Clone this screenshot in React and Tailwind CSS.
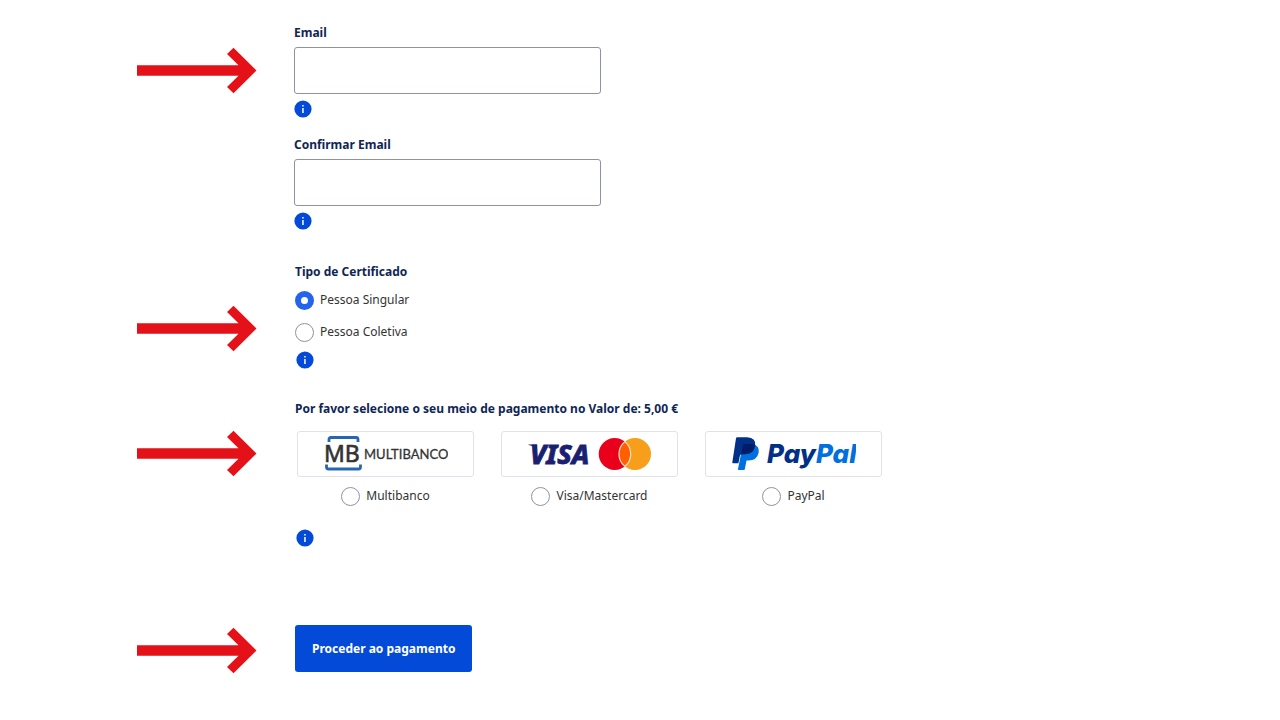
import React, { useState } from 'react';

const CERTIFICATE_TYPES = [
  { value: 'singular', label: 'Pessoa Singular' },
  { value: 'coletiva', label: 'Pessoa Coletiva' },
];

const PAYMENT_METHODS = [
  { value: 'multibanco', label: 'Multibanco', Logo: MultibancoLogo },
  { value: 'card', label: 'Visa/Mastercard', Logo: CardsLogo },
  { value: 'paypal', label: 'PayPal', Logo: PayPalLogo },
];

function MultibancoLogo() {
  return (
    <svg width="124" height="36" viewBox="0 0 124 36" aria-hidden="true">
      <path d="M5 6V3.500Q5 1.500 7 1.500H32Q34 1.500 34 3.500V6" fill="none" stroke="#2467b3" strokeWidth="2.8" />
      <path d="M2.500 28.500V31Q2.500 33 4.500 33H34.500Q36.500 33 36.500 31V28.500" fill="none" stroke="#2467b3" strokeWidth="2.8" />
      <text x="0" y="25.500" fontFamily="'Noto Sans', sans-serif" fontSize="23" fontWeight="400" fill="#333" stroke="#333" strokeWidth="0.6" strokeLinejoin="round">
        MB
      </text>
      <text x="40" y="23" fontFamily="Lato, sans-serif" fontSize="13" fontWeight="400" fill="#333" stroke="#333" strokeWidth="0.3" strokeLinejoin="round">
        MULTIBANCO
      </text>
    </svg>
  );
}

function CardsLogo() {
  return (
    <svg width="124" height="36" viewBox="0 0 124 36" aria-hidden="true">
      <path d="M0.500 8.500H9L9 14Q5 9.500 0.500 9Z" fill="#1a1f71" />
      <text x="2" y="28" fontFamily="'Noto Sans', sans-serif" fontSize="27" fontWeight="800" fontStyle="italic" fill="#1a1f71" stroke="#1a1f71" strokeWidth="0.8">
        VISA
      </text>
      <circle cx="86.700" cy="18" r="16" fill="#eb001b" />
      <circle cx="107" cy="18" r="16" fill="#f79e1b" />
      <path d="M96.850 5.600A16 16 0 0 1 96.850 30.400A16 16 0 0 1 96.850 5.600Z" fill="#ff5f00" stroke="#fde3c0" strokeWidth="1.2" />
    </svg>
  );
}

function PayPalLogo() {
  return (
    <svg width="124" height="36" viewBox="0 0 124 36" aria-hidden="true">
      <path d="M11 8H20Q28 9.500 26.700 16.500Q25 24.500 16.500 24.500H14.500L12.800 33.300Q12.600 34 11.900 34H6.600Q5.800 34 6 33.100Z" fill="#0070e0" />
      <path d="M5.200 1.200H15Q24.500 1.600 23.200 10Q21.600 18.300 12.800 18.300H9.600Q8.200 18.300 7.900 19.800L6.400 27.300H0.900Q0.200 27.300 0.300 26.600L4 2.300Q4.200 1.200 5.200 1.200Z" fill="#003087" />
      <path d="M11 8.500Q11.300 8 12 8H19.500Q21.500 8 23.100 9.100Q22 18.300 12.800 18.300H9.200Z" fill="#001c64" />
      <text x="35" y="27" fontFamily="Inter, sans-serif" fontSize="26" fontWeight="800" fontStyle="italic" fill="#003087">
        Pay
        <tspan fill="#0070e0">Pal</tspan>
      </text>
    </svg>
  );
}

function Arrow({ className }) {
  return (
    <svg width="120" height="47" viewBox="0 0 120 47" className={`shrink-0 ${className}`} aria-hidden="true">
      <path d="M0 18.200H101.500L90 7L96.500 0.700L119.500 23.500L96.500 46.300L90 40L101.500 28.800H0Z" fill="#e41218" />
    </svg>
  );
}

function InfoButton({ className }) {
  return (
    <button type="button" aria-label="Informação" className={`block size-[18px] ${className}`}>
      <svg viewBox="0 0 18 18" className="size-full">
        <circle cx="9" cy="9" r="8.600" fill="#034ad8" />
        <rect x="8.200" y="5" width="1.500" height="1.500" fill="#fff" />
        <rect x="8.200" y="8" width="1.500" height="5" fill="#fff" />
      </svg>
    </button>
  );
}

function Step({ arrowClass, className = '', children }) {
  return (
    <section className={`flex items-start gap-[37px] ${className}`}>
      <Arrow className={arrowClass} />
      <div className="min-w-0 flex-1">{children}</div>
    </section>
  );
}

function EmailField({ id, label }) {
  return (
    <div>
      <label htmlFor={id} className="block text-xs leading-[22px] font-bold text-[#0f2655]">
        {label}
      </label>
      <input
        id={id}
        type="email"
        className="mt-[3px] block h-[47px] w-full max-w-[307px] rounded-[3px] border border-[#8f92a1] px-3 text-xs"
      />
      <InfoButton className="mt-1.5" />
    </div>
  );
}

function RadioOption({ name, option, checked, onChange }) {
  return (
    <label className="flex h-[19px] items-start gap-1.5 text-xs leading-[17px] text-[#333]">
      <input
        type="radio"
        name={name}
        value={option.value}
        checked={checked}
        onChange={() => onChange(option.value)}
        className="size-[19px] shrink-0 appearance-none rounded-full border border-[#8f92a1] bg-white checked:border-[6px] checked:border-[#2463eb]"
      />
      {option.label}
    </label>
  );
}

export default function App() {
  const [certificate, setCertificate] = useState('singular');
  const [payment, setPayment] = useState(null);

  return (
    <form
      className="min-h-screen bg-white pt-[22px] pr-8 pb-12 pl-[137px] font-['Noto_Sans',sans-serif]"
      onSubmit={(e) => e.preventDefault()}
    >
      <Step arrowClass="mt-[25px]">
        <div className="space-y-4">
          <EmailField id="email" label="Email" />
          <EmailField id="confirm-email" label="Confirmar Email" />
        </div>
      </Step>

      <Step arrowClass="mt-11" className="mt-[31px]">
        <fieldset className="pl-px">
          <legend className="text-xs leading-[22px] font-bold text-[#0f2655]">Tipo de Certificado</legend>
          <div className="mt-2 flex flex-col items-start gap-[13px]">
            {CERTIFICATE_TYPES.map((option) => (
              <RadioOption
                key={option.value}
                name="certificate"
                option={option}
                checked={certificate === option.value}
                onChange={setCertificate}
              />
            ))}
          </div>
          <InfoButton className="mt-[9px] ml-px" />
        </fieldset>
      </Step>

      <Step arrowClass="mt-8" className="mt-[29px]">
        <fieldset className="pl-px">
          <legend className="text-xs leading-[22px] font-bold text-[#0f2655]">
            Por favor selecione o seu meio de pagamento no Valor de: 5,00 €
          </legend>
          <div className="mt-[11px] flex flex-wrap gap-x-[27px] gap-y-4 pl-0.5">
            {PAYMENT_METHODS.map(({ Logo, ...option }) => (
              <div key={option.value} className="flex w-[177px] flex-col items-center gap-2.5">
                <div className="flex h-[46px] w-full items-center justify-center rounded-[3px] border border-[#e0e3e8]">
                  <Logo />
                </div>
                <RadioOption
                  name="payment"
                  option={option}
                  checked={payment === option.value}
                  onChange={setPayment}
                />
              </div>
            ))}
          </div>
          <InfoButton className="mt-[23px] ml-px" />
        </fieldset>
      </Step>

      <Step arrowClass="mt-0.5" className="mt-[78px]">
        <div className="pl-px">
          <button
            type="submit"
            className="h-[47px] rounded-[3px] bg-[#034ad8] px-[17px] text-xs font-bold text-white"
          >
            Proceder ao pagamento
          </button>
        </div>
      </Step>
    </form>
  );
}
